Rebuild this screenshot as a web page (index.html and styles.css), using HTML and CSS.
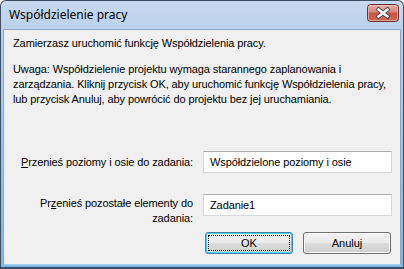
FILE: index.html
```html
<!DOCTYPE html>
<html lang="pl">
<head>
<meta charset="utf-8">
<title>Współdzielenie pracy</title>
<link rel="stylesheet" href="styles.css">
</head>
<body>
<div class="window">
  <div class="titlebar">
    <span class="title">Współdzielenie pracy</span>
    <span class="close">
      <svg width="32" height="18" viewBox="0 0 32 18">
        <defs>
          <linearGradient id="cg" x1="0" y1="0" x2="0" y2="1">
            <stop offset="0" stop-color="#e9b2a8"/>
            <stop offset="0.45" stop-color="#d98478"/>
            <stop offset="0.5" stop-color="#c75446"/>
            <stop offset="1" stop-color="#cf6a52"/>
          </linearGradient>
        </defs>
        <rect x="0.5" y="0.5" width="31" height="17" rx="3" fill="url(#cg)" stroke="#6e2f2a"/>
        <rect x="1.5" y="1.5" width="29" height="15" rx="2" fill="none" stroke="#f1c6bd" stroke-opacity="0.6"/>
        <path d="M11.5 5.5 L20.5 12.5 M20.5 5.5 L11.5 12.5" stroke="#4a4a4a" stroke-width="4.2" stroke-linecap="square"/>
        <path d="M11.5 5.5 L20.5 12.5 M20.5 5.5 L11.5 12.5" stroke="#ffffff" stroke-width="2.4" stroke-linecap="square"/>
      </svg>
    </span>
  </div>
  <div class="client">
    <p class="intro">Zamierzasz uruchomić funkcję Współdzielenia pracy.</p>
    <p class="note">Uwaga: Współdzielenie projektu wymaga starannego zaplanowania i<br>zarządzania. Kliknij przycisk OK, aby uruchomić funkcję Współdzielenia pracy,<br>lub przycisk Anuluj, aby powrócić do projektu bez jej uruchamiania.</p>
    <div class="field field-one">
      <label class="label"><u>P</u>rzenieś poziomy i osie do zadania:</label>
      <div class="input">Współdzielone poziomy i osie</div>
    </div>
    <div class="field field-two">
      <label class="label">Pr<u>z</u>enieś pozostałe elementy do<br>zadania:</label>
      <div class="input">Zadanie1</div>
    </div>
    <div class="buttons">
      <button class="btn btn-default"><span class="focus">OK</span></button>
      <button class="btn">Anuluj</button>
    </div>
  </div>
</div>
</body>
</html>
```
FILE: styles.css
```css
* { box-sizing: border-box; }
html, body {
  margin: 0;
  padding: 0;
  width: 404px;
  height: 269px;
  overflow: hidden;
  background: #ffffff;
}
.window {
  width: 404px;
  height: 269px;
  border: 1px solid #3d4e62;
  border-bottom-width: 2px;
  border-radius: 6px 6px 0 0;
  background: linear-gradient(#c6daf1 0px, #bad2eb 28px, #9ec7ec 120px, #7ab8ea 269px);
  padding: 0 2px 2px 2px;
  display: flex;
  flex-direction: column;
}
.titlebar {
  height: 28px;
  display: flex;
  align-items: center;
  justify-content: space-between;
  padding: 0 2px 0 6px;
}
.title {
  font-family: "Noto Sans", "Open Sans", sans-serif;
  font-size: 12px;
  color: #000;
  margin-top: -1px;
}
.close {
  display: block;
  width: 32px;
  height: 18px;
  margin-top: -4px;
}
.close svg { display: block; }
.client {
  flex: 1;
  background: #f0f0f0;
  border: 1px solid #8ea6c2;
  border-bottom: 1px solid #a9d3f0;
  padding: 6px 0 0 9px;
  font-family: "Liberation Sans", Arial, sans-serif;
  font-size: 11px;
  letter-spacing: -0.1px;
  color: #000;
}
.intro {
  margin: 0;
  line-height: 15px;
}
.note {
  margin: 11px 0 0 0;
  line-height: 15px;
}
.field {
  display: flex;
  align-items: center;
}
.field-one { margin-top: 44px; }
.field-two { margin-top: 21px; align-items: flex-start; }
.label {
  width: 180px;
  text-align: right;
  line-height: 15px;
}
.field-two .label { margin-top: 2px; }
.input {
  margin-left: 10px;
  width: 189px;
  height: 22px;
  background: #fff;
  border: 1px solid #d5d9de;
  border-top-color: #abadb3;
  padding: 0 0 0 6px;
  line-height: 20px;
}
.buttons {
  display: flex;
  gap: 10px;
  margin: 6px 0 0 192px;
}
.btn {
  width: 88px;
  height: 22px;
  border: 1px solid #707070;
  border-radius: 3px;
  background: linear-gradient(#f2f2f2 0%, #ebebeb 50%, #dddddd 51%, #cfcfcf 100%);
  font-family: "Liberation Sans", Arial, sans-serif;
  font-size: 11px;
  color: #000;
  padding: 0;
  box-shadow: inset 0 0 0 1px #fcfcfc;
}
.btn-default {
  border-color: #3c7fb1;
  box-shadow: inset 0 0 0 1px #48d4fb;
  padding: 2px;
}
.focus {
  display: flex;
  align-items: center;
  justify-content: center;
  width: 100%;
  height: 100%;
  border: 1px dotted #000;
}
```
